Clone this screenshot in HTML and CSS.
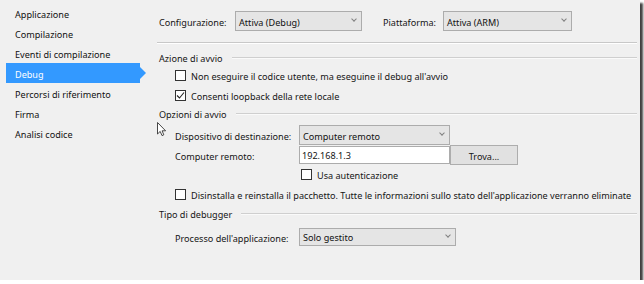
FILE: index.html
```html
<!DOCTYPE html>
<html lang="it">
<head>
    <meta charset="UTF-8">
    <title>Proprietà progetto - Debug</title>
    <link rel="stylesheet" href="styles.css">
</head>
<body>

    <div class="window">
        <ul class="sidebar">
            <li>Applicazione</li>
            <li>Compilazione</li>
            <li>Eventi di compilazione</li>
            <li class="active">Debug</li>
            <li>Percorsi di riferimento</li>
            <li>Firma</li>
            <li>Analisi codice</li>
        </ul>

        <div class="content">
            <div class="top-row">
                <span class="top-label conf-label">Configurazione:</span>
                <div class="combo conf-combo">Attiva (Debug)<span class="chevron"></span></div>
                <span class="top-label plat-label">Piattaforma:</span>
                <div class="combo plat-combo">Attiva (ARM)<span class="chevron"></span></div>
            </div>

            <div class="separator"></div>

            <div class="group-title first"><span>Azione di avvio</span></div>
            <div class="check-row">
                <span class="checkbox"></span>
                <span class="check-text">Non eseguire il codice utente, ma eseguine il debug all'avvio</span>
            </div>
            <div class="check-row">
                <span class="checkbox checked">
                    <svg width="9" height="9" viewBox="0 0 9 9"><polyline points="1,4.5 3.5,7 8,1.5" fill="none" stroke="#222" stroke-width="1.1"/></svg>
                </span>
                <span class="check-text">Consenti loopback della rete locale</span>
            </div>

            <div class="group-title"><span>Opzioni di avvio</span></div>
            <div class="form-row device-row">
                <span class="form-label">Dispositivo di destinazione:</span>
                <div class="combo device-combo">Computer remoto<span class="chevron"></span></div>
            </div>
            <div class="form-row remote-row">
                <span class="form-label">Computer remoto:</span>
                <div class="text-input">192.168.1.3</div>
                <div class="button">Trova...</div>
            </div>
            <div class="check-row auth-row">
                <span class="checkbox"></span>
                <span class="check-text">Usa autenticazione</span>
            </div>
            <div class="check-row">
                <span class="checkbox"></span>
                <span class="check-text">Disinstalla e reinstalla il pacchetto. Tutte le informazioni sullo stato dell'applicazione verranno eliminate</span>
            </div>

            <div class="group-title debugger-title"><span>Tipo di debugger</span></div>
            <div class="form-row process-row">
                <span class="form-label">Processo dell'applicazione:</span>
                <div class="combo process-combo">Solo gestito<span class="chevron"></span></div>
            </div>
        </div>

        <svg class="cursor" width="10" height="15" viewBox="0 0 10 15">
            <path d="M0.5 0.5 L0.5 12 L3.2 9.4 L5 13.6 L6.8 12.8 L5.1 8.8 L8.6 8.8 Z" fill="#fff" stroke="#333" stroke-width="0.9" stroke-linejoin="round"/>
        </svg>
    </div>

</body>
</html>
```

FILE: styles.css
```css
body {
    margin: 0;
    background: #fff;
    font-family: "Noto Sans", sans-serif;
    font-size: 9.1px;
    color: #151515;
}
.window {
    position: relative;
    display: flex;
    width: 640px;
    height: 280px;
    background: #f0f0f0;
    box-shadow: 3px 3px 2px rgba(0, 0, 0, 0.75);
}
.sidebar {
    list-style: none;
    margin: 3px 0 0 0;
    padding: 0;
    width: 147px;
    flex-shrink: 0;
}
.sidebar li {
    position: relative;
    height: 20px;
    line-height: 17px;
    padding-top: 3px;
    margin-left: 6px;
    width: 134px;
    padding-left: 9px;
    box-sizing: border-box;
    color: #111;
}
.sidebar li.active {
    background: #3399ff;
    color: #fff;
}
.sidebar li.active::after {
    content: "";
    position: absolute;
    right: -6px;
    top: 4px;
    border-left: 6px solid #3399ff;
    border-top: 6px solid transparent;
    border-bottom: 6px solid transparent;
}
.content {
    margin-left: 10px;
    width: 480px;
}
.top-row {
    display: flex;
    align-items: center;
    margin-top: 11px;
    height: 20px;
}
.top-label {
    padding-left: 2px;
    padding-top: 3px;
}
.conf-label {
    width: 76px;
}
.plat-label {
    margin-left: 19px;
    width: 60px;
}
.combo {
    position: relative;
    box-sizing: border-box;
    height: 20px;
    line-height: 15px;
    padding-top: 3px;
    padding-left: 3px;
    background: #e5e5e5;
    border: 1px solid #acacac;
    color: #111;
}
.chevron {
    position: absolute;
    right: 5px;
    top: 5px;
    width: 3px;
    height: 3px;
    border-right: 1px solid #808080;
    border-bottom: 1px solid #808080;
    transform: rotate(45deg);
}
.conf-combo {
    width: 127px;
}
.plat-combo {
    width: 129px;
}
.separator {
    margin-top: 11px;
    height: 0;
    border-top: 1px solid #c8c8c8;
    border-bottom: 1px solid #fff;
}
.group-title {
    display: flex;
    align-items: center;
    height: 14px;
    margin-top: 2px;
    padding-left: 2px;
}
.group-title span {
    padding-top: 1px;
}
.group-title.first {
    margin-top: 7px;
}
.group-title.debugger-title {
    margin-top: 3px;
}
.group-title::after {
    content: "";
    flex: 1;
    margin-left: 9px;
    border-top: 1px solid #cfcfcf;
    border-bottom: 1px solid #fafafa;
}
.check-row {
    display: flex;
    align-items: center;
    height: 20px;
    padding-left: 18px;
    white-space: nowrap;
}
.check-text {
    padding-top: 2px;
}
.check-row.auth-row {
    padding-left: 144px;
    height: 19px;
}
.checkbox {
    display: flex;
    align-items: center;
    justify-content: center;
    width: 11px;
    height: 11px;
    box-sizing: border-box;
    margin-right: 5px;
    border: 1px solid #333;
    background: #fff;
}
.form-row {
    display: flex;
    align-items: center;
    height: 20px;
    padding-left: 18px;
}
.device-row {
    margin-top: 4px;
}
.form-label {
    width: 124px;
    padding-top: 3px;
}
.device-combo {
    width: 151px;
}
.text-input {
    box-sizing: border-box;
    width: 151px;
    height: 18px;
    line-height: 14px;
    padding-top: 2px;
    padding-left: 2px;
    background: #fff;
    border: 1px solid #acacac;
}
.button {
    box-sizing: border-box;
    width: 68px;
    height: 20px;
    line-height: 15px;
    padding-top: 3px;
    text-align: center;
    background: #e1e1e1;
    border: 1px solid #adadad;
}
.process-row {
    margin-top: 7px;
    height: 18px;
}
.process-combo {
    width: 157px;
    height: 18px;
    line-height: 14px;
    padding-top: 2px;
}
.process-combo .chevron {
    top: 4px;
}
.cursor {
    position: absolute;
    left: 157px;
    top: 122px;
}
```
